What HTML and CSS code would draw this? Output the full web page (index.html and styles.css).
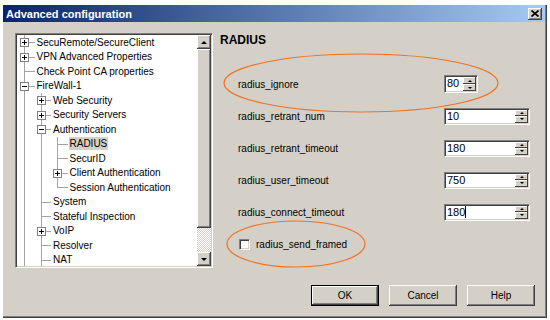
FILE: index.html
```html
<!DOCTYPE html>
<html lang="en">
<head>
  <meta charset="UTF-8">
  <title>Advanced configuration</title>
  <link rel="stylesheet" href="styles.css">
</head>
<body>
  <div class="dialog">
    <div class="titlebar">
      <span class="title">Advanced configuration</span>
      <button class="close"><svg width="8" height="7" viewBox="0 0 8 7"><path d="M0.5 0.5L7.5 6.5M7.5 0.5L0.5 6.5" stroke="#000" stroke-width="1.7"/></svg></button>
    </div>

    <div class="content">
      <div class="tree">
        <ul class="tree-list">
          <li class="node"><span class="g t"><i class="exp plus"></i></span><span class="label">SecuRemote/SecureClient</span></li>
          <li class="node"><span class="g t"><i class="exp plus"></i></span><span class="label">VPN Advanced Properties</span></li>
          <li class="node"><span class="g t"></span><span class="label">Check Point CA properties</span></li>
          <li class="node"><span class="g t"><i class="exp"></i></span><span class="label">FireWall-1</span></li>
          <li class="node"><span class="g v"></span><span class="g t"><i class="exp plus"></i></span><span class="label">Web Security</span></li>
          <li class="node"><span class="g v"></span><span class="g t"><i class="exp plus"></i></span><span class="label">Security Servers</span></li>
          <li class="node"><span class="g v"></span><span class="g t"><i class="exp"></i></span><span class="label">Authentication</span></li>
          <li class="node"><span class="g v"></span><span class="g v"></span><span class="g t"></span><span class="label selected">RADIUS</span></li>
          <li class="node"><span class="g v"></span><span class="g v"></span><span class="g t"></span><span class="label">SecurID</span></li>
          <li class="node"><span class="g v"></span><span class="g v"></span><span class="g t"><i class="exp plus"></i></span><span class="label">Client Authentication</span></li>
          <li class="node"><span class="g v"></span><span class="g v"></span><span class="g l"></span><span class="label">Session Authentication</span></li>
          <li class="node"><span class="g v"></span><span class="g t"></span><span class="label">System</span></li>
          <li class="node"><span class="g v"></span><span class="g t"></span><span class="label">Stateful Inspection</span></li>
          <li class="node"><span class="g v"></span><span class="g t"><i class="exp plus"></i></span><span class="label">VoIP</span></li>
          <li class="node"><span class="g v"></span><span class="g t"></span><span class="label">Resolver</span></li>
          <li class="node"><span class="g v"></span><span class="g t"></span><span class="label">NAT</span></li>
        </ul>
        <div class="scrollbar">
          <div class="sb-btn"><span class="tri up"></span></div>
          <div class="sb-thumb"></div>
          <div class="sb-track"></div>
          <div class="sb-btn"><span class="tri down"></span></div>
        </div>
      </div>

      <div class="props">
        <h2 class="props-title">RADIUS</h2>
        <div class="prop">
          <span class="prop-name">radius_ignore</span>
          <div class="spin spin-small"><span class="spin-value">80</span><span class="spin-arrows"><span class="arrow up"></span><span class="arrow down"></span></span></div>
        </div>
        <div class="prop">
          <span class="prop-name">radius_retrant_num</span>
          <div class="spin"><span class="spin-value">10</span><span class="spin-arrows"><span class="arrow up"></span><span class="arrow down"></span></span></div>
        </div>
        <div class="prop">
          <span class="prop-name">radius_retrant_timeout</span>
          <div class="spin"><span class="spin-value">180</span><span class="spin-arrows"><span class="arrow up"></span><span class="arrow down"></span></span></div>
        </div>
        <div class="prop">
          <span class="prop-name">radius_user_timeout</span>
          <div class="spin"><span class="spin-value">750</span><span class="spin-arrows"><span class="arrow up"></span><span class="arrow down"></span></span></div>
        </div>
        <div class="prop">
          <span class="prop-name">radius_connect_timeout</span>
          <div class="spin"><span class="spin-value">180<span class="caret"></span></span><span class="spin-arrows"><span class="arrow up"></span><span class="arrow down"></span></span></div>
        </div>
        <label class="check-row"><span class="checkbox"></span>radius_send_framed</label>
      </div>
    </div>

    <div class="buttons">
      <button class="btn default">OK</button>
      <button class="btn">Cancel</button>
      <button class="btn">Help</button>
    </div>
  </div>

  <!-- annotation rings drawn over the dialog -->
  <svg class="marks" width="550" height="320" viewBox="0 0 550 320">
    <ellipse cx="361" cy="83" rx="137" ry="29" fill="none" stroke="#f07024" stroke-width="1.2"/>
    <ellipse cx="296" cy="244" rx="69" ry="23" fill="none" stroke="#f07024" stroke-width="1.2"/>
  </svg>
</body>
</html>
```

FILE: styles.css
```css
body {
  margin: 0;
  background: #fff;
  font-family: "Liberation Sans", Arial, sans-serif;
  font-size: 10px;
  color: #000;
  position: relative;
}
.dialog {
  margin: 5px 0 0 3px;
  width: 544px;
  height: 313px;
  box-sizing: border-box;
  background: #d4d0c8;
  display: flex;
  flex-direction: column;
  box-shadow: inset -1px -1px #404040, inset -2px -2px #808080;
}
.titlebar {
  height: 17px;
  margin-right: 2px;
  display: flex;
  align-items: center;
  justify-content: space-between;
  background: linear-gradient(to right, #0a246a, #a6caf0);
}
.title {
  padding-left: 3px;
  color: #fff;
  font-weight: bold;
  font-size: 11px;
}
.close {
  width: 14px;
  height: 12px;
  margin-right: 3px;
  padding: 0;
  border: 0;
  background: #d4d0c8;
  box-shadow: inset -1px -1px #404040, inset 1px 1px #fff, inset -2px -2px #808080;
  display: flex;
  align-items: center;
  justify-content: center;
}
.content {
  display: flex;
  padding: 11px 0 0 12px;
}

/* tree */
.tree {
  width: 198px;
  height: 235px;
  box-sizing: border-box;
  display: flex;
  background: #fff;
  border: 1px solid;
  border-color: #808080 #fff #fff #808080;
  box-shadow: inset 1px 1px #404040, inset -1px -1px #d4d0c8;
  padding: 1px;
}
.tree-list {
  flex: 1;
  list-style: none;
  margin: 0;
  padding: 0;
  overflow: hidden;
}
.node {
  display: flex;
  align-items: center;
  height: 14.5px;
  white-space: nowrap;
}
.g {
  position: relative;
  width: 16.5px;
  flex: none;
  align-self: stretch;
}
.g.v::before, .g.t::before, .g.l::before {
  content: "";
  position: absolute;
  left: 7px;
  top: 0;
  bottom: 0;
  border-left: 1px solid #a4a4a4;
}
.g.l::before {
  bottom: auto;
  height: 7px;
}
.g.t::after, .g.l::after {
  content: "";
  position: absolute;
  left: 7px;
  right: -1px;
  top: 7px;
  border-top: 1px solid #a4a4a4;
}
.exp {
  position: absolute;
  left: 3px;
  top: 3px;
  width: 7px;
  height: 7px;
  border: 1px solid #808080;
  background: #fff;
  z-index: 1;
}
.exp::before {
  content: "";
  position: absolute;
  left: 1px;
  top: 3px;
  width: 5px;
  height: 1px;
  background: #000;
}
.exp.plus::after {
  content: "";
  position: absolute;
  left: 3px;
  top: 1px;
  width: 1px;
  height: 5px;
  background: #000;
}
.label {
  margin-left: 2px;
  padding: 0 1px;
  line-height: 13px;
}
.label.selected {
  background: #d4d0c8;
}
.scrollbar {
  width: 14px;
  flex: none;
  display: flex;
  flex-direction: column;
}
.sb-btn, .sb-thumb {
  background: #d4d0c8;
  box-shadow: inset -1px -1px #404040, inset 1px 1px #fff, inset -2px -2px #808080;
}
.sb-btn {
  height: 14px;
  flex: none;
  display: flex;
  align-items: center;
  justify-content: center;
}
.sb-thumb {
  height: 179px;
  flex: none;
}
.sb-track {
  flex: 1;
  background: repeating-conic-gradient(#fff 0 25%, #d4d0c8 0 50%) 0 0 / 2px 2px;
}
.tri {
  width: 0;
  height: 0;
  border-left: 3px solid transparent;
  border-right: 3px solid transparent;
}
.tri.up { border-bottom: 3px solid #000; }
.tri.down { border-top: 3px solid #000; }

/* properties */
.props {
  width: 310px;
  margin-left: 7px;
}
.props-title {
  margin: 0 0 21px;
  font-size: 12px;
  line-height: 14px;
  font-weight: bold;
}
.prop {
  display: flex;
  align-items: center;
  height: 32px;
  padding-left: 18px;
}
.prop-name {
  width: 206px;
  flex: none;
}
.spin {
  width: 86px;
  height: 17px;
  box-sizing: border-box;
  display: flex;
  background: #fff;
  border: 1px solid;
  border-color: #808080 #fff #fff #808080;
  box-shadow: inset 1px 1px #404040, inset -1px -1px #d4d0c8;
  padding: 1px;
}
.spin-small {
  width: 34px;
  height: 18px;
}
.spin-value {
  flex: 1;
  font-size: 11px;
  line-height: 13px;
  padding-left: 1px;
}
.caret {
  display: inline-block;
  width: 1px;
  height: 12px;
  background: #000;
  vertical-align: -2px;
}
.spin-arrows {
  width: 13px;
  display: flex;
  flex-direction: column;
}
.arrow {
  flex: 1;
  display: flex;
  align-items: center;
  justify-content: center;
  background: #d4d0c8;
  box-shadow: inset -1px -1px #404040, inset 1px 1px #fff;
}
.arrow::before {
  content: "";
  border-left: 2px solid transparent;
  border-right: 2px solid transparent;
}
.arrow.up::before { border-bottom: 2px solid #000; }
.arrow.down::before { border-top: 2px solid #000; }
.check-row {
  display: flex;
  align-items: center;
  gap: 6px;
  height: 32px;
  padding-left: 19px;
}
.checkbox {
  width: 11px;
  height: 11px;
  box-sizing: border-box;
  background: #fff;
  border: 1px solid;
  border-color: #808080 #fff #fff #808080;
  box-shadow: inset 1px 1px #404040, inset -1px -1px #d4d0c8;
}

/* buttons */
.buttons {
  margin-top: auto;
  display: flex;
  justify-content: flex-end;
  gap: 10px;
  padding: 0 12px 12px 0;
}
.btn {
  width: 68px;
  height: 21px;
  padding: 0;
  border: 0;
  font-family: "Liberation Sans", Arial, sans-serif;
  font-size: 10px;
  color: #000;
  background: #d4d0c8;
  box-shadow: inset -1px -1px #404040, inset 1px 1px #fff, inset -2px -2px #808080;
}
.btn.default {
  box-shadow: inset 0 0 0 1px #000, inset -2px -2px #404040, inset 2px 2px #fff, inset -3px -3px #808080;
}
.marks {
  position: absolute;
  top: 0;
  left: 0;
  pointer-events: none;
}
```
